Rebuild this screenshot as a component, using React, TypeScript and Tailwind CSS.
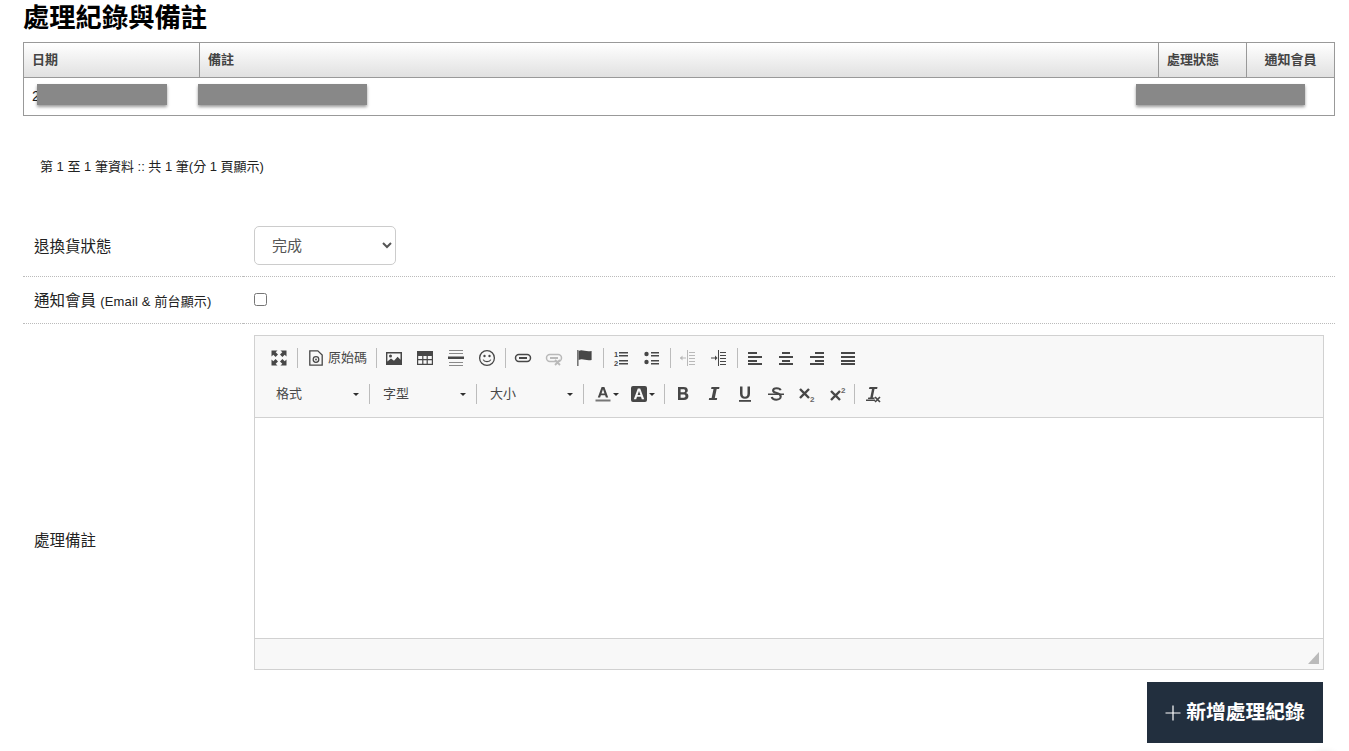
import type { ReactNode } from 'react';

const FONT = 'font-["Liberation_Sans","Noto_Sans_CJK_TC",sans-serif]';

function Icon({ children, w = 18 }: { children: ReactNode; w?: number }) {
  return (
    <svg width={w} height={18} viewBox={`0 0 ${w} 18`} fill="#474747" className="block">
      {children}
    </svg>
  );
}

function Btn({ children, w = 'w-[31px]' }: { children: ReactNode; w?: string }) {
  return <div className={`${w} h-[30px] flex items-center justify-center flex-shrink-0`}>{children}</div>;
}

function Sep({ className = 'mx-[2px]' }: { className?: string }) {
  return <div className={`w-px h-[20px] bg-[#bcbcbc] flex-shrink-0 ${className}`} />;
}

function Caret() {
  return <div className="w-0 h-0 border-x-[3px] border-x-transparent border-t-[3px] border-t-[#2f2f2f]" />;
}

function Combo({ label }: { label: string }) {
  return (
    <div className="w-[104px] h-[30px] flex items-center justify-between pl-[12px] pr-[9px] text-[13px] text-[#484848] flex-shrink-0">
      <span>{label}</span>
      <Caret />
    </div>
  );
}

const lines = (rows: [number, number, number][], h = 2) =>
  rows.map(([x, y, w], i) => <rect key={i} x={x} y={y} width={w} height={h} />);

function Toolbar() {
  return (
    <div className="h-[82px] bg-[#f8f8f8] border-b border-[#d1d1d1] pl-[9px] pt-[7px]">
      <div className="flex items-center h-[30px]">
        <Btn w="w-[30px]">
          <Icon>
            <path d="M1.5 1.5h6L5.7 3.3 8 5.6 5.6 8 3.3 5.700 1.5 7.5zM16.5 1.5v6l-1.8-1.8L12.4 8 10 5.6l2.3-2.3-1.8-1.8zM1.5 16.5v-6l1.8 1.8L5.6 10 8 12.4l-2.3 2.3 1.8 1.8zM16.5 16.5h-6l1.8-1.8L10 12.4l2.4-2.4 2.3 2.3 1.8-1.8z" />
          </Icon>
        </Btn>
        <Sep className="ml-[3px] mr-[2px]" />
        <div className="w-[73.5px] h-[30px] flex items-center flex-shrink-0 pl-[7px] text-[13px] text-[#484848] gap-[3px]">
          <Icon>
            <path fill="none" stroke="#474747" strokeWidth="1.3" d="M2.800 1.800h8L15.200 6v10.200H2.800z" />
            <circle cx="9" cy="10.500" r="2.800" fill="none" stroke="#474747" strokeWidth="1.3" />
            <circle cx="9" cy="10.500" r="0.900" />
          </Icon>
          <span>原始碼</span>
        </div>
        <Sep />
        <Btn>
          <Icon>
            <path fillRule="evenodd" d="M1 3h16v13H1zm1.4 1.4v8l3.6-3 3 2.4 3.6-4 2.900 3V4.400z" />
            <circle cx="5.5" cy="7" r="1.5" />
          </Icon>
        </Btn>
        <Btn>
          <Icon>
            <path fillRule="evenodd" d="M1 2h16v14H1zm1.200 5v3h4v-3zm5.200 0v3h3.200v-3zm4.400 0v3h4v-3zm-9.600 4.200v3.600h4v-3.600zm5.200 0v3.600h3.200v-3.600zm4.400 0v3.600h4v-3.600z" />
          </Icon>
        </Btn>
        <Btn>
          <Icon>
            <g fill="#8a8a8a">{lines([[2, 1, 14], [2, 4, 14], [2, 13, 14], [2, 16, 14]], 1)}</g>
            <rect x="1" y="7.500" width="16" height="2.500" />
          </Icon>
        </Btn>
        <Btn>
          <Icon>
            <circle cx="9" cy="9" r="7.400" fill="none" stroke="#474747" strokeWidth="1.3" />
            <circle cx="6.500" cy="7" r="1.200" />
            <circle cx="11.500" cy="7" r="1.200" />
            <path d="M5.200 10.600c1 2.600 6.600 2.600 7.600 0" fill="none" stroke="#474747" strokeWidth="1.2" />
          </Icon>
        </Btn>
        <Sep />
        <Btn>
          <Icon>
            <rect x="1.500" y="5.600" width="15" height="6.800" rx="3.400" fill="none" stroke="#474747" strokeWidth="1.5" />
            <rect x="5" y="8" width="8" height="2" />
          </Icon>
        </Btn>
        <Btn>
          <Icon>
            <g opacity="0.35">
              <rect x="1.500" y="5.600" width="15" height="6.800" rx="3.400" fill="none" stroke="#474747" strokeWidth="1.5" />
              <rect x="5" y="8" width="8" height="2" />
              <path d="m10 11 5 5m0-5-5 5" stroke="#474747" strokeWidth="1.8" />
            </g>
          </Icon>
        </Btn>
        <Btn>
          <Icon>
            <rect x="1" y="1" width="1.600" height="16" fill="#777" />
            <path d="M2.600 2c4-2 7 1.400 13 0v9c-5.500 1.400-8.500-2-13 0z" />
          </Icon>
        </Btn>
        <Sep />
        <Btn>
          <Icon>
            <g>{lines([[7, 3, 9], [7, 6, 9], [7, 11, 9], [7, 14, 9]], 1.5)}</g>
            <text x="2" y="8" fontSize="7.500" fontWeight="bold" fontFamily="Liberation Sans">1</text>
            <text x="2" y="16.500" fontSize="7.500" fontWeight="bold" fontFamily="Liberation Sans">2</text>
          </Icon>
        </Btn>
        <Btn>
          <Icon>
            <circle cx="3.500" cy="5" r="2.200" />
            <circle cx="3.500" cy="13" r="2.200" />
            <g>{lines([[8, 3, 8], [8, 6, 8], [8, 11, 8], [8, 14, 8]], 1.5)}</g>
          </Icon>
        </Btn>
        <Sep />
        <Btn>
          <Icon>
            <g opacity="0.35">
              <rect x="8" y="1" width="1" height="16" />
              {lines([[10, 3, 6], [10, 6, 6], [10, 9, 6], [10, 12, 6], [10, 15, 6]], 1)}
              {lines([[1, 8.500, 6]], 1)}
              <path d="M1 9l2.500-2.500v5z" />
            </g>
          </Icon>
        </Btn>
        <Btn>
          <Icon>
            <rect x="8" y="1" width="1" height="16" />
            {lines([[10, 3, 6], [10, 6, 6], [10, 9, 6], [10, 12, 6], [10, 15, 6]], 1)}
            {lines([[1, 8.500, 5]], 1)}
            <path d="M7.500 9 5 6.500v5z" />
          </Icon>
        </Btn>
        <Sep />
        <Btn>
          <Icon>{lines([[2, 3, 9], [2, 7, 14], [2, 11, 9], [2, 14, 14]])}</Icon>
        </Btn>
        <Btn>
          <Icon>{lines([[5, 3, 8], [2, 7, 14], [5, 11, 8], [2, 14, 14]])}</Icon>
        </Btn>
        <Btn>
          <Icon>{lines([[7, 3, 9], [2, 7, 14], [7, 11, 9], [2, 14, 14]])}</Icon>
        </Btn>
        <Btn>
          <Icon>{lines([[2, 3, 14], [2, 7, 14], [2, 11, 14], [2, 14, 14]])}</Icon>
        </Btn>
      </div>
      <div className="flex items-center h-[30px] mt-[6px]">
        <Combo label="格式" />
        <Sep className="mx-[1px]" />
        <Combo label="字型" />
        <Sep className="mx-[1px]" />
        <Combo label="大小" />
        <Sep className="mx-[1px]" />
        <div className="w-[37px] h-[30px] flex items-center pl-[9px] gap-[1px] flex-shrink-0">
          <Icon>
            <path d="M7.600 2h2.800l3.800 10.600h-2.300l-.8-2.400H6.900l-.8 2.400H3.800zm2.900 6.500L9 4.300 7.500 8.500z" />
            <rect x="1.500" y="14.500" width="15" height="2" fill="#777" />
          </Icon>
          <Caret />
        </div>
        <div className="w-[40px] h-[30px] flex items-center pl-[8px] gap-[1px] flex-shrink-0">
          <Icon>
            <path
              fillRule="evenodd"
              d="M3 1h12a2 2 0 0 1 2 2v12a2 2 0 0 1-2 2H3a2 2 0 0 1-2-2V3a2 2 0 0 1 2-2zm4.800 2.600-4 10.600h2.400l.8-2.400h4l.8 2.400h2.400l-4-10.600zM9 6l1.400 4H7.600z"
            />
          </Icon>
          <Caret />
        </div>
        <Sep className="ml-[2px] mr-[2.5px]" />
        <Btn>
          <Icon>
            <path
              fillRule="evenodd"
              d="M4 2h5.800c2.600 0 4 1.200 4 3.300 0 1.300-.7 2.300-1.800 2.800 1.500.4 2.400 1.500 2.400 3.100 0 2.400-1.600 3.800-4.400 3.800H4zm2.600 2.200v3h2.800c1.100 0 1.700-.5 1.700-1.500s-.6-1.500-1.700-1.500zm0 5.200v3.400h3c1.200 0 1.900-.6 1.900-1.700s-.7-1.700-1.900-1.700z"
            />
          </Icon>
        </Btn>
        <Btn>
          <Icon>
            <path d="M6.500 2h8l-.4 2h-2.400l-1.900 9h2.400l-.4 2h-8l.4-2h2.400l1.900-9H6.100z" />
          </Icon>
        </Btn>
        <Btn>
          <Icon>
            <path d="M4 1.500h2.500v7c0 2.200 1 3.200 2.500 3.200s2.500-1 2.500-3.200v-7H14v7.300c0 3.400-2 5-5 5s-5-1.600-5-5z" />
            <rect x="3" y="15" width="12" height="1.800" />
          </Icon>
        </Btn>
        <Btn>
          <Icon>
            <path d="M13.600 5.200c-.4-1.300-1.800-2-3.900-2-2.300 0-3.600 1-3.600 2.400 0 1.500 1.400 2 3.600 2.500 2.600.6 4 1.400 4 3.300 0 1.900-1.700 3.300-4.400 3.300-2.500 0-4.100-1-4.600-2.700" fill="none" stroke="#474747" strokeWidth="2.1" />
            <rect x="1" y="8.500" width="16" height="1.500" />
          </Icon>
        </Btn>
        <Btn>
          <Icon>
            <path d="m2 4 4.500 4.500L11 4M2 13l4.500-4.500L11 13" fill="none" stroke="#474747" strokeWidth="2.4" />
            <text x="12" y="16.500" fontSize="8" fontWeight="bold" fill="#666" fontFamily="Liberation Sans">2</text>
          </Icon>
        </Btn>
        <Btn>
          <Icon>
            <path d="m2 6 4.500 4.500L11 6M2 15l4.500-4.500L11 15" fill="none" stroke="#474747" strokeWidth="2.4" />
            <text x="12" y="7.500" fontSize="8" fontWeight="bold" fill="#666" fontFamily="Liberation Sans">2</text>
          </Icon>
        </Btn>
        <Sep className="mx-[0.5px]" />
        <div className="w-[1px] flex-shrink-0" />
        <Btn>
          <Icon>
            <path d="M6.500 2h8l-.4 2h-2.600l-1.700 8.500h2l-.4 1.500h-6.500l.4-1.500h2l1.700-8.500H5.900z" />
            <rect x="3" y="14.500" width="9" height="1.500" />
            <path d="m12 12 5 5m0-5-5 5" stroke="#474747" strokeWidth="1.7" />
          </Icon>
        </Btn>
      </div>
    </div>
  );
}

function Editor() {
  return (
    <div className="w-[1070px] h-[335px] border border-[#d1d1d1] flex flex-col">
      <Toolbar />
      <div className="flex-1 bg-white" />
      <div className="h-[31px] bg-[#f8f8f8] border-t border-[#d1d1d1] flex items-end justify-end pr-[4px] pb-[5px]">
        <div className="w-0 h-0 border-l-[11px] border-l-transparent border-b-[12px] border-b-[#bbb]" />
      </div>
    </div>
  );
}

const redactClass = 'absolute top-[42px] h-[21px] bg-[#888] shadow-[0_2px_3px_rgba(0,0,0,0.4)]';

export default function App() {
  return (
    <div className={`relative w-[1349px] h-[751px] overflow-hidden bg-white text-[#222] ${FONT}`}>
      <div className="pl-[23px] pr-[14px]">
        <h2 className="h-[42px] pt-[2px] text-[26.3px] leading-[33px] font-bold text-black">處理紀錄與備註</h2>
        <div className="relative">
          <table className="w-full table-fixed border-collapse border border-[#999] text-[13px]">
            <colgroup>
              <col className="w-[176px]" />
              <col />
              <col className="w-[88px]" />
              <col className="w-[88px]" />
            </colgroup>
            <thead>
              <tr className="h-[35px] bg-gradient-to-b from-white to-[#e0e0e0] text-[#444]">
                <th className="border border-[#999] pl-[8px] text-left font-bold">日期</th>
                <th className="border border-[#999] pl-[8px] text-left font-bold">備註</th>
                <th className="border border-[#999] pl-[8px] text-left font-bold">處理狀態</th>
                <th className="border border-[#999] text-center font-bold">通知會員</th>
              </tr>
            </thead>
            <tbody>
              <tr className="h-[38px]">
                <td className="pl-[8px] text-[14px]">2</td>
                <td />
                <td />
                <td />
              </tr>
            </tbody>
          </table>
          <div className={`${redactClass} left-[14px] w-[130px]`} />
          <div className={`${redactClass} left-[175px] w-[169px]`} />
          <div className={`${redactClass} left-[1113px] w-[169px]`} />
        </div>
        <p className="mt-[42px] pl-[17px] text-[13px] leading-[18px] text-[#222]">第 1 至 1 筆資料 :: 共 1 筆(分 1 頁顯示)</p>

        <div className="mt-[50px] flex h-[51px] text-[15.5px]">
          <div className="w-[220px] pl-[11px] pt-[10px] leading-[22px] border-b border-dotted border-[#bbb]">退換貨狀態</div>
          <div className="flex-1 pl-[11px] border-b border-dotted border-[#bbb]">
            <select
              defaultValue="done"
              className="w-[142px] h-[39px] pl-[13px] rounded-[5px] border border-[#ccc] bg-white text-[15px] text-[#555]"
            >
              <option value="done">完成</option>
            </select>
          </div>
        </div>
        <div className="flex h-[47px]">
          <div className="w-[220px] pl-[11px] pt-[13px] text-[15.5px] leading-[22px] border-b border-dotted border-[#bbb]">
            通知會員 <span className="text-[13px] tracking-[0.15px]">(Email &amp; 前台顯示)</span>
          </div>
          <div className="flex-1 pl-[11px] pt-[16px] border-b border-dotted border-[#bbb]">
            <input type="checkbox" className="m-0 w-[13px] h-[13px] block" />
          </div>
        </div>
        <div className="flex mt-[11px]">
          <div className="w-[220px] pl-[11px] pt-[195px] text-[15.5px] leading-[22px]">處理備註</div>
          <div className="pl-[11px]">
            <Editor />
          </div>
        </div>
        <div className="flex justify-end mt-[12px] pr-[12px]">
          <button className="w-[176px] h-[61px] bg-[#222f3e] text-white text-[19.8px] font-bold flex items-center justify-center gap-[5px]">
            <svg width="16" height="16" viewBox="0 0 16 16" stroke="#fff" strokeWidth="1.2">
              <path d="M8 .5v15M.5 8h15" />
            </svg>
            <span>新增處理紀錄</span>
          </button>
        </div>
      </div>
      {/* floating button sitting just below the fold, only its shadow shows */}
      <div className="absolute left-[1309px] top-[753px] w-[30px] h-[30px] rounded-full shadow-[0_0_8px_rgba(0,0,0,0.12)]" />
    </div>
  );
}
